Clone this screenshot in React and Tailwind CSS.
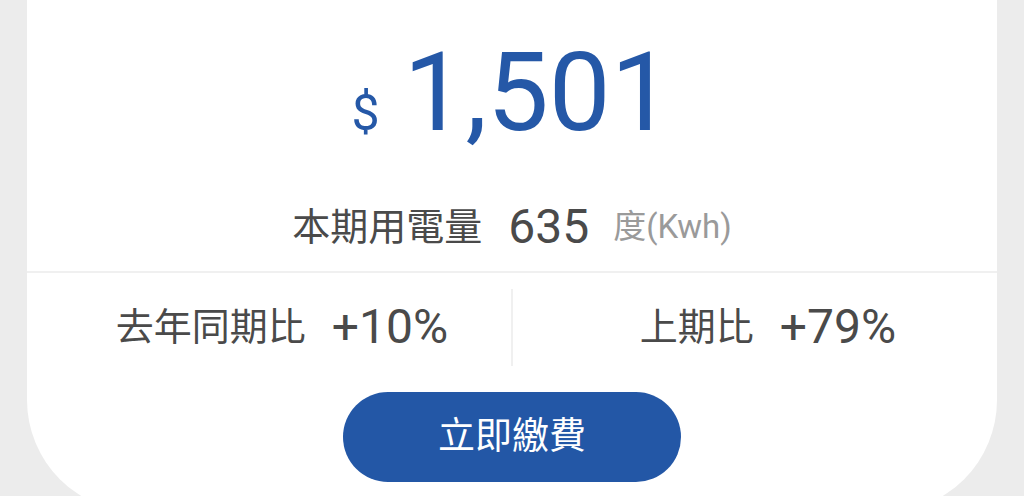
import React from 'react';

const font = { fontFamily: 'Roboto, "Noto Sans CJK TC", sans-serif' };

export default function App() {
    return (
        <div className="w-[1024px] h-[496px] overflow-hidden bg-[#ececec] px-[27px]" style={font}>
            <div className="h-[512px] bg-white rounded-b-[112px] flex flex-col">
                {/* Amount */}
                <div className="h-[187px] pt-[38px] flex items-baseline justify-center text-[#2558a7]">
                    <span className="text-[50px] leading-none">$</span>
                    <span className="ml-[24px] text-[110px] leading-none">1,501</span>
                </div>

                {/* Usage */}
                <div className="h-[84px] pb-[4px] flex items-center justify-center">
                    <span className="text-[38px] text-[#4a4a4a]">本期用電量</span>
                    <span className="ml-[26px] text-[48px] text-[#4a4a4a]">635</span>
                    <span className="ml-[24px] text-[33px] text-[#9a9a9a]">度(Kwh)</span>
                </div>

                <div className="border-t-2 border-[#f0f0f0]" />

                {/* Comparison */}
                <div className="h-[108px] flex items-center">
                    <div className="flex-1 flex items-center justify-center pl-[26px]">
                        <span className="text-[38px] text-[#4a4a4a]">去年同期比</span>
                        <span className="ml-[26px] text-[48px] text-[#4a4a4a]">+10%</span>
                    </div>
                    <div className="w-[2px] h-[77px] bg-[#f0f0f0]" />
                    <div className="flex-1 flex items-center justify-center pl-[26px]">
                        <span className="text-[38px] text-[#4a4a4a]">上期比</span>
                        <span className="ml-[26px] text-[48px] text-[#4a4a4a]">+79%</span>
                    </div>
                </div>

                <button className="mt-[11px] self-center w-[338px] h-[90px] rounded-full bg-[#2357a6] text-white text-[37px]">
                    立即繳費
                </button>
            </div>
        </div>
    );
}
